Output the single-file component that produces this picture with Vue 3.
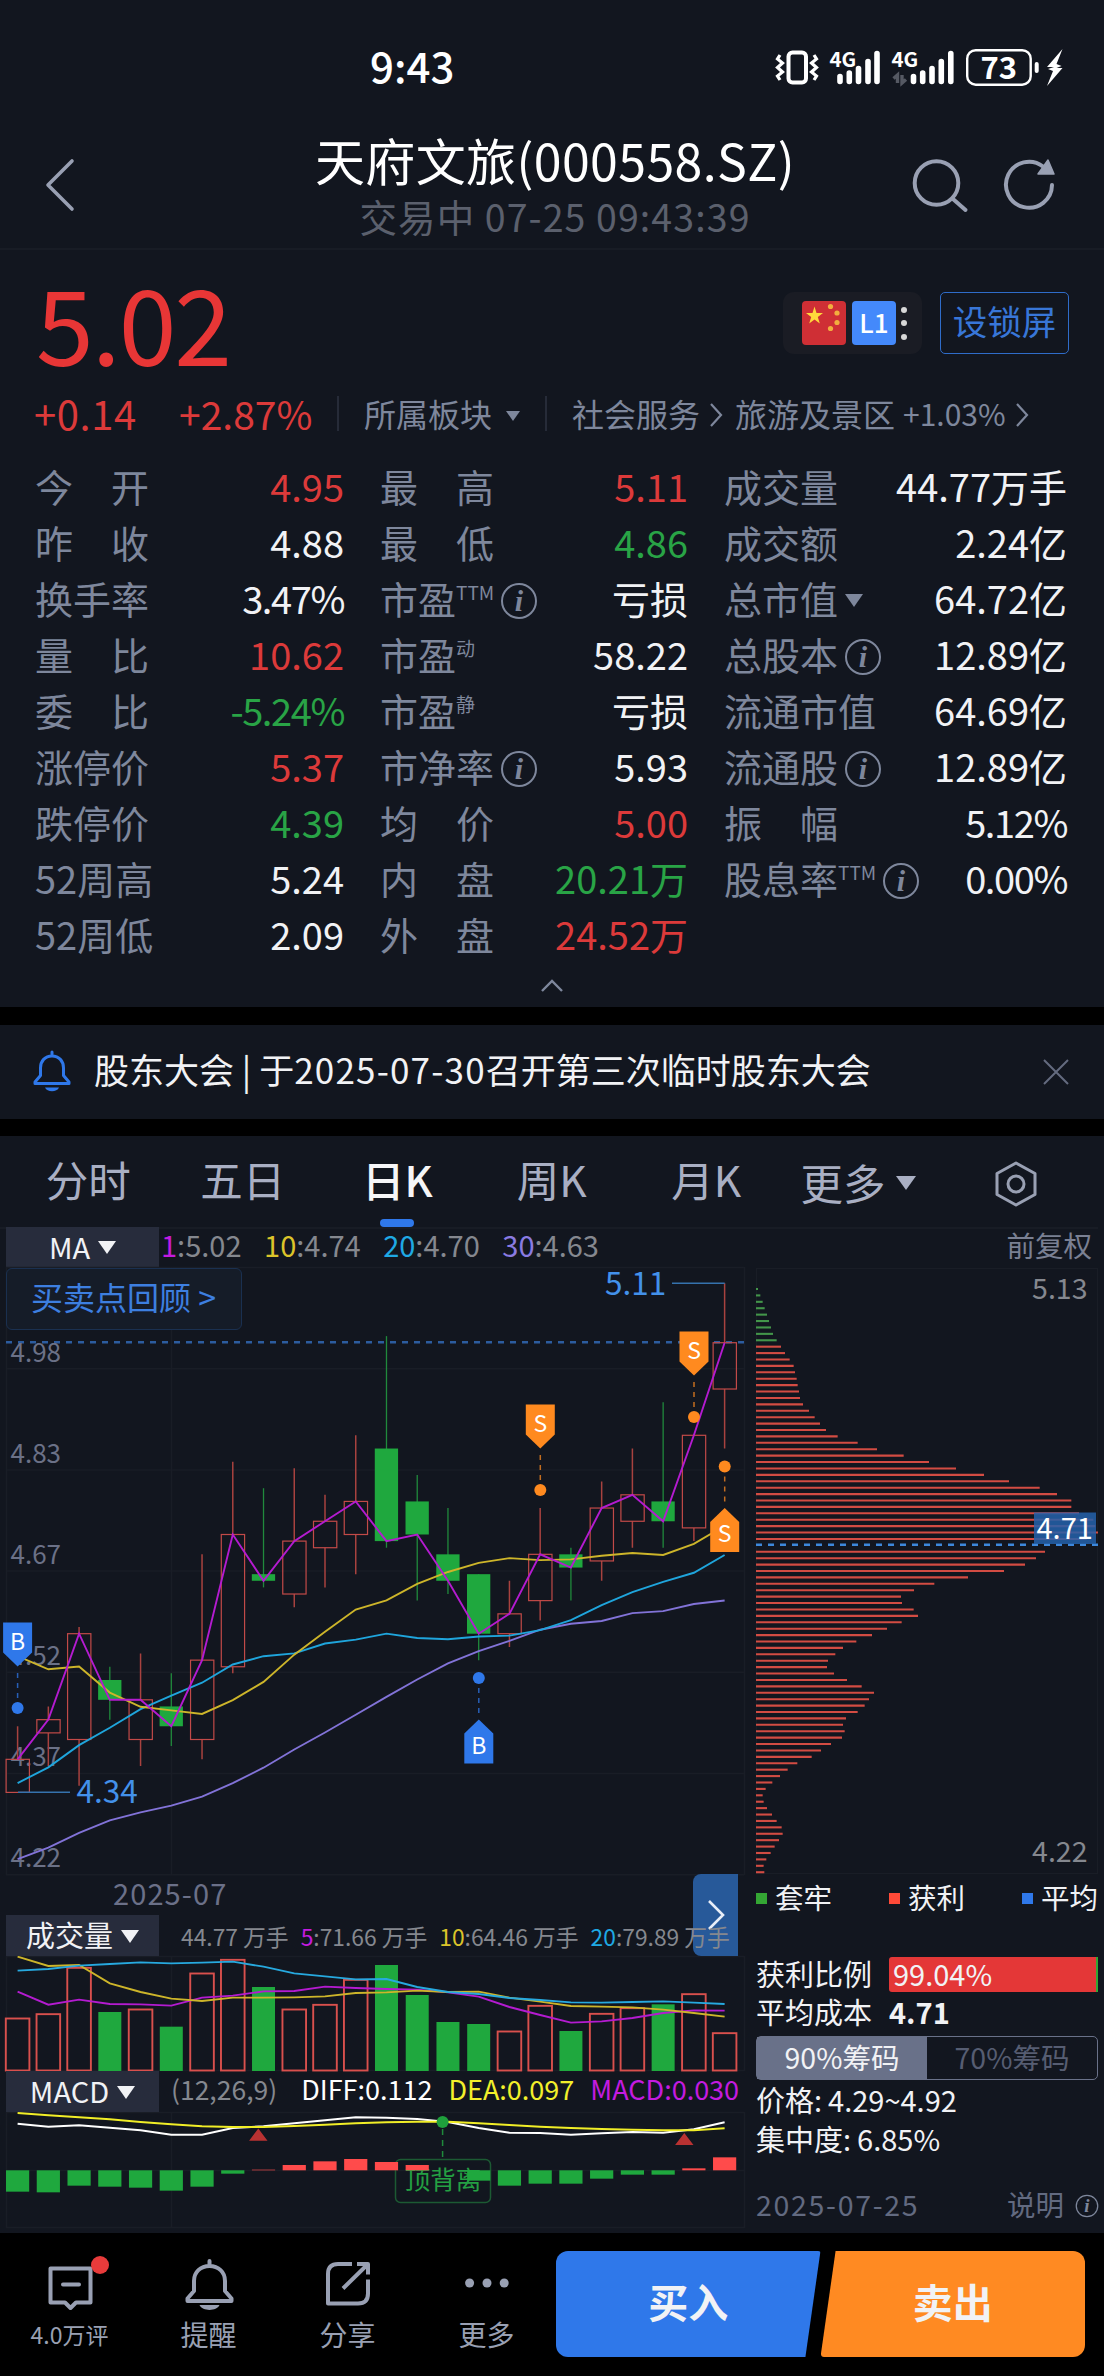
<template>
  <div class="screen">
    <div class="status-bar">
      <span class="clock">9:43</span>
      <svg class="status-icons" width="292" height="44" viewBox="774 46 292 44">
        <g fill="none" stroke="#fff">
          <rect x="788.5" y="52.5" width="17.5" height="30" rx="4" stroke-width="4" />
          <path d="M780 55l-2.5 4 5 4-5 4.500 5 4.500-5 4 2.500 4" stroke-width="3.200" />
          <path d="M814 55l2.500 4-5 4 5 4.500-5 4.500 5 4-2.500 4" stroke-width="3.200" />
          <rect x="967.200" y="50.200" width="63.500" height="34.500" rx="8.500" stroke-width="2.400" />
          <g stroke-width="5.600" stroke-linecap="round">
            <path d="M840 76.500v5M849.300 73v8.500M858.500 68.500v13M868 61.500v20M877 53.500v28" />
            <path d="M913.500 76.500v5M922.700 73v8.500M932 68.500v13M941.300 61.500v20M950.800 53.500v28" />
          </g>
          <path d="M1036.700 64v7" stroke-width="4" stroke-linecap="round" />
        </g>
        <path d="M897.500 83V75l-4 3.500M902 75v8l4-3.500" stroke="#555963" stroke-width="3.400" fill="none" />
        <path d="M1062.500 49l-15.500 18h7l-6 2 5 2-6 15 15.500-18h-6l5-2-5-2z" fill="#fff" />
        <text class="net" x="829.500" y="67">4G</text>
        <text class="net" x="891.500" y="67">4G</text>
        <text class="battery" x="980.500" y="79">73</text>
      </svg>
    </div>

    <header class="header">
      <svg class="back" width="34" height="56" viewBox="0 0 34 56">
        <path d="M30 4L6 28l24 24" fill="none" stroke="#99a0b3" stroke-width="3.600" stroke-linecap="round" stroke-linejoin="round" />
      </svg>
      <div class="title-box">
        <div class="title">天府文旅(000558.SZ)</div>
        <div class="subtitle">交易中 07-25 09:43:39</div>
      </div>
      <div class="header-actions">
        <svg width="58" height="56" viewBox="0 0 58 56">
          <g fill="none" stroke="#99a0b3" stroke-width="4" stroke-linecap="round">
            <circle cx="25.500" cy="26" r="21.800" />
            <path d="M42 42l12.500 11" />
          </g>
        </svg>
        <svg width="56" height="56" viewBox="0 0 56 56">
          <path d="M50 28A23 23 0 1 1 41 9.500" fill="none" stroke="#99a0b3" stroke-width="4" stroke-linecap="round" />
          <path d="M36 17L46 3l6 14z" fill="#99a0b3" stroke="#99a0b3" stroke-width="1.500" stroke-linejoin="round" />
        </svg>
      </div>
    </header>

    <section class="quote">
      <div class="price-row">
        <span class="price">5.02</span>
        <div class="level-pill">
          <svg width="44" height="44" viewBox="0 0 44 44">
            <rect width="44" height="44" rx="4" fill="#cf2f35" />
            <polygon points="12.500,5.500 14.500,12 21,12 15.800,16 17.800,22.500 12.500,18.500 7.200,22.500 9.200,16 4,12 10.500,12" fill="#ffd93b" />
            <g fill="#f2ae3e">
              <circle cx="28.500" cy="5.500" r="2.600" />
              <circle cx="35" cy="12" r="2.600" />
              <circle cx="35" cy="21.500" r="2.600" />
              <circle cx="28.500" cy="27.500" r="2.600" />
            </g>
          </svg>
          <span class="l1">L1</span>
          <span class="dots"><i></i><i></i><i></i></span>
        </div>
        <span class="lock-btn">设锁屏</span>
      </div>

      <div class="board-row">
        <span class="change first">+0.14</span>
        <span class="change">+2.87%</span>
        <span class="divider"></span>
        <span class="board">所属板块</span>
        <span class="tri small"></span>
        <span class="divider second"></span>
        <span class="board">社会服务</span>
        <svg class="chevron" width="14" height="26" viewBox="0 0 14 26"><path d="M2 2l10 11L2 24" /></svg>
        <span class="board">旅游及景区</span>
        <span class="board-change">+1.03%</span>
        <svg class="chevron last" width="14" height="26" viewBox="0 0 14 26"><path d="M2 2l10 11L2 24" /></svg>
      </div>

      <div class="stats">
        <div v-for="(col, c) in stats" :key="c" class="stats-col">
          <div v-for="item in col" :key="item.label + (item.sup || '')" class="stat">
            <span class="stat-label">{{ item.label }}</span>
            <span v-if="item.sup" class="stat-sup">{{ item.sup }}</span>
            <svg v-if="item.info" class="info" width="38" height="38" viewBox="0 0 38 38">
              <circle cx="19" cy="19" r="17" />
              <text x="19" y="29">i</text>
            </svg>
            <span v-if="item.drop" class="tri stat-drop"></span>
            <span class="stat-value" :class="[item.color, { percent: item.value.endsWith('%') }]">{{ item.value }}</span>
          </div>
        </div>
      </div>

      <div class="collapse">
        <svg width="26" height="16" viewBox="0 0 26 16"><path d="M3 13L13 3l10 10" /></svg>
      </div>
    </section>

    <section class="notice">
      <svg width="42" height="44" viewBox="0 0 42 44">
        <path d="M21 2v4M21 6c-7 0-11.500 5-11.500 12v7.500L4 32v1.500h34V32l-5.500-6.500V18c0-7-4.500-12-11.500-12z" fill="none" stroke="#2f78ea" stroke-width="3" stroke-linejoin="round" stroke-linecap="round" />
        <path d="M14 37.500h14c-2 5-12 5-14 0z" fill="#2f78ea" />
      </svg>
      <span class="notice-text">股东大会 | 于<span class="date">2025-07-30</span>召开第三次临时股东大会</span>
      <svg class="close" width="28" height="28" viewBox="0 0 28 28"><path d="M2 2l24 24M26 2L2 26" /></svg>
    </section>

    <nav class="tabs">
      <span v-for="tab in tabs" :key="tab" class="tab" :class="{ active: tab === '日K' }">{{ tab }}</span>
      <span class="tab more">更多<i class="tri"></i></span>
      <svg class="setting" width="46" height="48" viewBox="0 0 46 48">
        <path d="M23 3l19 10.500v21L23 45 4 34.500v-21z" fill="none" stroke="#99a0b3" stroke-width="3" stroke-linejoin="round" />
        <circle cx="23" cy="24" r="8" fill="none" stroke="#99a0b3" stroke-width="3" />
      </svg>
    </nav>

    <section class="charts">
      <div class="left">
        <div class="legend ma-row">
          <span class="chip">MA<i class="tri"></i></span>
          <span v-for="ma in maLegend" :key="ma.n" class="ma"><b :style="{ color: ma.color }">{{ ma.n }}</b>:{{ ma.v }}</span>
        </div>

        <div class="kline">
          <svg width="745" height="608" viewBox="0 0 745 608">
            <g class="grid">
              <path v-for="n in 7" :key="n" :d="`M6 ${(n - 1) * 101.200 + 0.5}H744`" />
              <path d="M6.500 0V608M171.500 0V608M744.500 0V608" />
            </g>
            <path d="M6 75.300H744" stroke="#2c5c9f" stroke-width="2.600" stroke-dasharray="6 6" />
            <text v-for="(p, i) in priceLabels" :key="p" class="axis" x="10.500" :y="i * 101 + 95">{{ p }}</text>

            <g v-for="(k, i) in candles" :key="i">
              <template v-if="isUp(i)">
                <path :d="`M${cx(i)} ${py(k[0])}V${py(k[2])}M${cx(i)} ${py(k[1])}V${py(k[3])}`" stroke="#a8423f" stroke-width="1.500" />
                <rect :x="cx(i) - 11.500" :y="py(k[2])" width="23.300" :height="py(k[1]) - py(k[2])" fill="none" stroke="#c24a48" stroke-width="1.200" />
              </template>
              <template v-else>
                <path :d="`M${cx(i)} ${py(k[0])}V${py(k[3])}`" stroke="#208a3c" stroke-width="1.300" />
                <rect :x="cx(i) - 11.700" :y="py(k[1])" width="23.300" :height="py(k[2]) - py(k[1])" fill="#1fa83e" />
              </template>
            </g>

            <g fill="none" stroke-width="1.900">
              <polyline :points="points(ma30, ky)" stroke="#8273d8" />
              <polyline :points="points(ma20, ky)" stroke="#1fa5dc" />
              <polyline :points="points(ma10, ky)" stroke="#cdb52a" />
              <polyline :points="closePoints" stroke="#b41bd0" />
            </g>

            <path d="M18 525.200H70M672 16.200H724.700" stroke="#3572ad" stroke-width="1.400" />
            <text class="extreme" x="76.500" y="535.500">4.34</text>
            <text class="extreme" x="605" y="27.500">5.11</text>

            <g v-for="m in markers" :key="m.x" :transform="`translate(${m.x} ${m.y})`" :fill="m.color">
              <circle r="6" />
              <path :d="m.up ? 'M0 10V38' : 'M0 -10V-36'" :stroke="m.color" stroke-width="1.500" stroke-dasharray="5 5" opacity="0.750" />
              <path :d="m.up ? 'M-14.500 85.500V55.500L0 41.500L14.500 55.500V85.500z' : 'M-14.500 -85.500V-55.500L0 -41.500L14.500 -55.500V-85.500z'" />
              <text class="mark" x="0" :y="m.up ? 76 : -58">{{ m.t }}</text>
            </g>
          </svg>
          <span class="review">买卖点回顾 &gt;</span>
        </div>

        <div class="month"><span>2025-07</span></div>

        <div class="legend vol-row">
          <span class="chip">成交量<i class="tri"></i></span>
          <span class="vol">44.77 万手</span>
          <span v-for="v in volLegend" :key="v.n" class="vol"><b :style="{ color: v.color }">{{ v.n }}</b>:{{ v.v }} 万手</span>
          <span class="next">
            <svg width="20" height="32" viewBox="0 0 20 32"><path d="M3 2l14 14L3 30" /></svg>
          </span>
        </div>

        <svg width="745" height="115" viewBox="0 0 745 115">
          <g class="grid">
            <path d="M6 0.500H744M6 114.500H744M6.500 0V115M171.500 0V115M744.500 0V115" />
          </g>
          <template v-for="(v, i) in volumes" :key="i">
            <rect v-if="isUp(i)" :x="cx(i) - 11.800" :y="vy(v) + 0.5" width="23.600" :height="114 - vy(v)" fill="none" stroke="#d9504d" stroke-width="1.900" />
            <rect v-else :x="cx(i) - 11.500" :y="vy(v)" width="23" :height="115 - vy(v)" fill="#1fa83e" />
          </template>
          <g fill="none" stroke-width="1.900">
            <polyline :points="points(vol5, vy)" stroke="#b41bd0" />
            <polyline :points="points(vol10, vy)" stroke="#cdb52a" />
            <polyline :points="points(vol20, vy)" stroke="#27a9df" />
          </g>
        </svg>

        <div class="legend macd-row">
          <span class="chip">MACD<i class="tri"></i></span>
          <span class="macd params">(12,26,9)</span>
          <span class="macd diff">DIFF:0.112</span>
          <span class="macd dea">DEA:0.097</span>
          <span class="macd bar">MACD:0.030</span>
        </div>

        <svg width="745" height="116" viewBox="0 0 745 116">
          <g class="grid">
            <path d="M6 0.500H744M6 58.500H744M6 115.500H744M6.500 0V116M171.500 0V116M744.500 0V116" />
          </g>
          <rect x="395.500" y="47.500" width="95" height="43" rx="5" fill="none" stroke="#1c5a33" stroke-width="1.500" />
          <text class="diverge" x="443" y="77">顶背离</text>
          <template v-for="(v, i) in macdBars" :key="i">
            <rect :x="cx(i) - 11.600" :y="Math.min(58.300, my(v))" width="23.200" :height="Math.abs(my(v) - 58.300)" :fill="v < 931 ? '#ff4b4b' : '#1fa83e'" />
          </template>
          <g fill="none" stroke-width="2">
            <polyline :points="points(diff, my)" stroke="#fff" />
            <polyline :points="points(dea, my)" stroke="#f1ee27" />
          </g>
          <path d="M258.300 16.500l9.200 12.300h-18.400zM684.300 21l9.200 12h-18.400z" fill="#b93232" />
          <path d="M442.600 17V47" stroke="#1f8a3b" stroke-width="1.500" stroke-dasharray="6 5" />
          <circle cx="442.600" cy="10" r="6" fill="#1fa03c" />
        </svg>
      </div>

      <div class="right">
        <div class="adjust">前复权</div>
        <svg width="344" height="606" viewBox="0 0 344 606">
          <rect class="frame" x="1.500" y="0.500" width="341" height="605" />
          <path v-for="(w, i) in chips" :key="i" :d="`M1 ${i * 6.409 + 21}h${(w - 48) / 3}`" :stroke="i < 9 ? '#43954a' : '#d34c43'" stroke-width="2.100" />
          <path d="M1 276.800H343" stroke="#3d88dc" stroke-width="2.400" stroke-dasharray="6 6" />
          <rect x="279" y="244.500" width="62" height="31.500" fill="#2462ab" opacity="0.850" />
          <text class="cost" x="281.500" y="271">4.71</text>
          <text class="range" x="332.500" y="30.500">5.13</text>
          <text class="range" x="332.500" y="594">4.22</text>
        </svg>
        <div class="chip-legend">
          <span><i class="trapped"></i>套牢</span>
          <span><i class="profit"></i>获利</span>
          <span><i class="average"></i>平均</span>
        </div>
        <div class="ratio"><span>获利比例</span><span class="ratio-bar">99.04%</span></div>
        <div class="cost-row"><span>平均成本</span><b>4.71</b></div>
        <div class="segment"><span class="on">90%筹码</span><span>70%筹码</span></div>
        <div class="detail"><span>价格:</span>4.29~4.92</div>
        <div class="detail"><span>集中度:</span>6.85%</div>
        <div class="chip-foot">
          <span class="chip-date">2025-07-25</span>
          <span class="explain">说明</span>
          <svg class="info" width="24" height="24" viewBox="0 0 38 38">
            <circle cx="19" cy="19" r="17" />
            <text x="19" y="29">i</text>
          </svg>
        </div>
      </div>
    </section>

    <footer class="bottom">
      <div class="action">
        <svg width="64" height="60" viewBox="37 2250 64 60" overflow="visible">
          <path d="M49.500 2266.500h40v34H75l-5.500 5.500-5.500-5.500H49.500zM62 2282.500h16" />
          <circle cx="99" cy="2263" r="9" fill="#e83b3b" stroke="none" />
        </svg>
        <span class="small-label">4.0万评</span>
      </div>
      <div class="action">
        <svg width="60" height="60" viewBox="178 2252 60 60">
          <path d="M208.500 2261v4M208.500 2266c-9 0-15.500 6-15.500 15v10l-6.500 7.500v2.500h44v-2.500l-6.500-7.500v-10c0-9-6.500-15-15.500-15z" />
          <path d="M198.500 2305h20c-3 6.500-17 6.500-20 0z" fill="#99a0b3" stroke="none" />
        </svg>
        <span>提醒</span>
      </div>
      <div class="action">
        <svg width="60" height="60" viewBox="317 2252 60 60">
          <path d="M351 2264h-14q-10 0-10 10v29.500h30q10 0 10-10V2279.500M356 2264h11v10.500M366 2265l-24 23.500" stroke-linecap="butt" />
        </svg>
        <span>分享</span>
      </div>
      <div class="action">
        <svg width="60" height="60" viewBox="456 2253 60 60">
          <g fill="#99a0b3" stroke="none">
            <circle cx="468.600" cy="2284" r="4.500" />
            <circle cx="486" cy="2284" r="4.500" />
            <circle cx="503.200" cy="2284" r="4.500" />
          </g>
        </svg>
        <span>更多</span>
      </div>
      <div class="trade">
        <div class="buy">买入</div>
        <div class="sell">卖出</div>
      </div>
    </footer>
  </div>
</template>

<script setup>
const stats = [
  [
    { label: '今　开', value: '4.95', color: 'red' },
    { label: '昨　收', value: '4.88' },
    { label: '换手率', value: '3.47%' },
    { label: '量　比', value: '10.62', color: 'red' },
    { label: '委　比', value: '-5.24%', color: 'green' },
    { label: '涨停价', value: '5.37', color: 'red' },
    { label: '跌停价', value: '4.39', color: 'green' },
    { label: '52周高', value: '5.24' },
    { label: '52周低', value: '2.09' }
  ],
  [
    { label: '最　高', value: '5.11', color: 'red' },
    { label: '最　低', value: '4.86', color: 'green' },
    { label: '市盈', sup: 'TTM', info: true, value: '亏损' },
    { label: '市盈', sup: '动', value: '58.22' },
    { label: '市盈', sup: '静', value: '亏损' },
    { label: '市净率', info: true, value: '5.93' },
    { label: '均　价', value: '5.00', color: 'red' },
    { label: '内　盘', value: '20.21万', color: 'green' },
    { label: '外　盘', value: '24.52万', color: 'red' }
  ],
  [
    { label: '成交量', value: '44.77万手' },
    { label: '成交额', value: '2.24亿' },
    { label: '总市值', drop: true, value: '64.72亿' },
    { label: '总股本', info: true, value: '12.89亿' },
    { label: '流通市值', value: '64.69亿' },
    { label: '流通股', info: true, value: '12.89亿' },
    { label: '振　幅', value: '5.12%' },
    { label: '股息率', sup: 'TTM', info: true, value: '0.00%' }
  ]
]

const tabs = ['分时', '五日', '日K', '周K', '月K']

const maLegend = [
  { n: '1', v: '5.02', color: '#c41be0' },
  { n: '10', v: '4.74', color: '#dcc42a' },
  { n: '20', v: '4.70', color: '#1fa9e4' },
  { n: '30', v: '4.63', color: '#8a7be2' }
]

const volLegend = [
  { n: '5', v: '71.66', color: '#c41be0' },
  { n: '10', v: '64.46', color: '#dcc42a' },
  { n: '20', v: '79.89', color: '#1fa9e4' }
]

const priceLabels = ['4.98', '4.83', '4.67', '4.52', '4.37', '4.22']

// [high, body bottom, body top, low] for up days, [high, body top, body bottom, low] for down days
const candles = [
  [4.44, 4.34, 4.39, 4.34],
  [4.47, 4.43, 4.45, 4.38],
  [4.59, 4.42, 4.58, 4.35],
  [4.53, 4.51, 4.48, 4.45],
  [4.55, 4.42, 4.48, 4.38],
  [4.52, 4.47, 4.44, 4.41],
  [4.7, 4.42, 4.54, 4.39],
  [4.84, 4.53, 4.73, 4.52],
  [4.8, 4.67, 4.66, 4.65],
  [4.83, 4.64, 4.72, 4.62],
  [4.79, 4.71, 4.75, 4.65],
  [4.88, 4.73, 4.78, 4.67],
  [5.03, 4.86, 4.72, 4.71],
  [4.82, 4.78, 4.73, 4.63],
  [4.77, 4.7, 4.66, 4.64],
  [4.67, 4.67, 4.58, 4.54],
  [4.66, 4.58, 4.61, 4.56],
  [4.77, 4.63, 4.7, 4.6],
  [4.71, 4.7, 4.68, 4.63],
  [4.81, 4.69, 4.77, 4.66],
  [4.86, 4.75, 4.79, 4.71],
  [4.93, 4.78, 4.75, 4.71],
  [4.88, 4.74, 4.88, 4.72],
  [5.11, 4.95, 5.02, 4.86]
]

const ma10 = [1002, 1035, 1028, 1094, 1130, 1139, 1148, 1113, 1067, 998, 940, 884, 861, 819, 789, 766, 754, 759, 757, 748, 741, 746, 718, 672]
const ma20 = [1323, 1283, 1227, 1183, 1136, 1102, 1069, 1023, 1002, 995, 970, 960, 945, 956, 959, 952, 950, 936, 911, 873, 840, 814, 791, 746]
const ma30 = [1515, 1486, 1449, 1417, 1397, 1380, 1357, 1323, 1284, 1238, 1195, 1150, 1105, 1061, 1020, 989, 963, 935, 920, 913, 893, 888, 870, 861]

const volumes = [474, 461, 322, 456, 447, 500, 339, 298, 381, 447, 433, 358, 315, 405, 486, 492, 513, 436, 513, 460, 443, 433, 401, 518]
const vol5 = [395, 434, 419, 432, 433, 437, 413, 407, 394, 393, 380, 384, 387, 389, 397, 410, 441, 465, 488, 484, 474, 459, 451, 452]
const vol10 = [290, 318, 315, 370, 396, 416, 423, 413, 413, 412, 409, 399, 397, 392, 396, 395, 413, 425, 438, 440, 442, 449, 459, 470]
const vol20 = [332, 327, 317, 312, 307, 310, 308, 305, 320, 340, 349, 358, 357, 381, 396, 402, 414, 420, 427, 428, 426, 424, 428, 432]

const macdBars = [995, 997, 977, 980, 983, 992, 980, 941, 929, 915, 904, 897, 906, 915, 931, 962, 977, 971, 971, 956, 944, 944, 925, 892]
const diff = [791, 800, 796, 803, 811, 824, 824, 804, 799, 790, 781, 772, 773, 777, 786, 804, 818, 819, 824, 820, 816, 818, 808, 787]
const dea = [759, 766, 772, 778, 786, 793, 799, 801, 801, 798, 794, 790, 787, 785, 785, 790, 795, 800, 804, 807, 809, 811, 811, 805]

const chips = [
  54, 61, 68, 74, 81, 87, 93, 99, 110, 123, 135, 149, 161, 165, 170, 173, 177, 180, 189, 207, 224, 240, 258,
  293, 353, 411, 491, 567, 648, 732, 807, 899, 951, 994, 994, 1017, 1060, 1066, 1074, 1040, 48, 915, 888, 855,
  792, 684, 583, 522, 483, 486, 521, 534, 485, 441, 396, 349, 309, 286, 264, 261, 282, 321, 365, 402, 387, 374,
  353, 318, 309, 314, 306, 273, 243, 215, 172, 143, 120, 97, 77, 68, 71, 81, 96, 110, 125, 128, 117, 104, 92,
  79, 71, 73
]

const markers = [
  { x: 17.6, y: 441, t: 'B', color: '#2f78ea' },
  { x: 540.3, y: 223, t: 'S', color: '#ff8a1f' },
  { x: 694, y: 150, t: 'S', color: '#ff8a1f' },
  { x: 724.7, y: 199.4, t: 'S', color: '#ff8a1f', up: true },
  { x: 478.8, y: 411, t: 'B', color: '#2f78ea', up: true }
]

const cx = (i) => 17.6 + i * 30.74
const py = (price) => 16.2 + (5.11 - price) * 661.3
const ky = (v) => v / 2.529 - 7
const vy = (v) => v / 3 - 96
const my = (v) => v / 3 - 252

const isUp = (i) => candles[i][2] > candles[i][1]
const points = (list, y) => list.map((v, i) => `${cx(i)},${y(v)}`).join(' ')
const closePoints = candles.map((k, i) => `${cx(i)},${py(k[2])}`).join(' ')
</script>

<style>
body {
  margin: 0;
  background: #000;
}
</style>

<style scoped>
.screen {
  width: 1104px;
  height: 2376px;
  overflow: hidden;
  background: #12161f;
  color: #f1f2f5;
  font-family: "Noto Sans CJK SC", "Noto Sans", sans-serif;
  white-space: nowrap;
}

.screen * {
  box-sizing: border-box;
}

svg {
  display: block;
  flex: none;
  overflow: visible;
}

.red {
  color: #dc3a3a;
}

.green {
  color: #29a446;
}

.tri {
  display: inline-block;
  width: 0;
  height: 0;
  border: 9px solid transparent;
  border-top: 13px solid currentColor;
  border-bottom: 0;
}

/* status bar */
.status-bar {
  display: flex;
  justify-content: space-between;
  height: 118px;
  padding: 46px 38px 0 370px;
}

.clock {
  font-size: 42px;
  font-weight: 500;
  line-height: 38px;
  color: #fff;
}

.net {
  font-size: 20.500px;
  font-weight: 700;
  fill: #fff;
}

.battery {
  font-size: 31px;
  font-weight: 700;
  fill: #fff;
}

/* header */
.header {
  display: grid;
  grid-template-columns: 203px 1fr 197px;
  height: 132px;
  border-bottom: 2px solid #181c25;
}

.back {
  margin: 39px 0 0 42px;
}

.title-box {
  padding-top: 10px;
  text-align: center;
}

.title {
  font-size: 50px;
  line-height: 62px;
  letter-spacing: 0.4px;
  color: #fff;
}

.subtitle {
  font-size: 37.500px;
  line-height: 52px;
  letter-spacing: 1.1px;
  color: #5b606d;
}

.header-actions {
  display: flex;
  gap: 33px;
  padding-top: 39px;
  margin-left: 4px;
}

/* quote */
.quote {
  height: 757px;
}

.price-row {
  display: flex;
  align-items: center;
  height: 142px;
  padding: 0 35px 0 36px;
}

.price {
  flex: 1;
  font-size: 104px;
  line-height: 142px;
  letter-spacing: -2px;
  color: #e83636;
}

.level-pill {
  display: flex;
  align-items: center;
  gap: 6px;
  width: 139px;
  height: 62px;
  padding-left: 19px;
  margin: 4px 18px 0 0;
  border-radius: 11px;
  background: #1a1c24;
}

.l1 {
  width: 44px;
  height: 44px;
  border-radius: 4px;
  background: #4489fb;
  color: #fff;
  font-size: 26px;
  font-weight: 500;
  line-height: 41px;
  text-align: center;
}

.dots {
  display: flex;
  flex-direction: column;
  gap: 7.500px;
  margin-left: -1px;
}

.dots i {
  width: 6px;
  height: 6px;
  border-radius: 50%;
  background: #d8d8d8;
}

.lock-btn {
  width: 129px;
  height: 62px;
  margin-top: 4px;
  border: 1.5px solid #2f6cc9;
  border-radius: 5px;
  color: #3876d8;
  font-size: 34.500px;
  line-height: 54px;
  text-align: center;
}

.board-row {
  display: flex;
  align-items: center;
  height: 42px;
  padding-left: 34px;
  line-height: 42px;
  color: #7e879c;
}

.change {
  width: 158px;
  font-size: 39px;
  color: #dc3a3a;
}

.change.first {
  width: 145px;
  font-size: 40px;
  letter-spacing: 0.6px;
}

.divider {
  width: 2px;
  height: 35px;
  margin-right: 25px;
  background: #262b38;
}

.board {
  font-size: 32px;
}

.tri.small {
  margin: 5px 25px 0 14px;
  border-width: 10px 7.500px 0;
}

.chevron {
  margin: 4px 12px 0 9px;
  fill: none;
  stroke: #7e879c;
  stroke-width: 2.2;
}

.board-change {
  margin-left: 8px;
  font-size: 30px;
}

.stats {
  display: grid;
  grid-template-columns: 309px 308px 343px;
  column-gap: 36px;
  padding: 24px 0 0 35px;
}

.stat {
  display: flex;
  align-items: center;
  height: 56px;
  font-size: 38px;
  line-height: 56px;
}

.stat-label,
.stat-sup {
  color: #7e879c;
}

.stat-sup {
  align-self: flex-start;
  margin-top: 12px;
  font-size: 19px;
  line-height: 20px;
}

.stat-value {
  margin-left: auto;
}

.stat-value.percent {
  letter-spacing: -1.4px;
}

.stat-drop {
  margin: 4px 0 0 7px;
  color: #7e879c;
}

.info {
  margin: 5px 0 0 6px;
}

.info circle {
  fill: none;
  stroke: #7e879c;
  stroke-width: 2;
}

.info text {
  fill: #7e879c;
  font: italic bold 30px "Liberation Serif", serif;
  text-anchor: middle;
}

.collapse {
  display: flex;
  justify-content: center;
  padding-top: 16px;
}

.collapse path {
  fill: none;
  stroke: #7e879c;
  stroke-width: 2.4;
}

/* notice */
.notice {
  display: flex;
  align-items: center;
  height: 129px;
  padding: 0 34px 0 31px;
  border: solid #000;
  border-width: 18px 0 17px;
}

.notice-text {
  flex: 1;
  margin: -8px 0 0 21px;
  font-size: 35px;
}

.date {
  letter-spacing: 1.2px;
}

.close path {
  fill: none;
  stroke: #646b7f;
  stroke-width: 2;
}

/* tabs */
.tabs {
  display: flex;
  height: 91px;
  padding-left: 11px;
}

.tab {
  position: relative;
  width: 154.5px;
  color: #a9afc3;
  font-size: 42.500px;
  line-height: 86px;
  text-align: center;
}

.tab.active {
  color: #f6f6f8;
  font-weight: 500;
}

.tab.active::after {
  content: "";
  position: absolute;
  left: 60px;
  bottom: 0;
  width: 34px;
  height: 8px;
  border-radius: 4px;
  background: #2f78ea;
}

.tab.more {
  display: flex;
  align-items: center;
  gap: 10px;
  width: 182px;
  padding-left: 17px;
}

.tab.more .tri {
  margin-top: 2px;
  border-width: 14px 10.500px 0;
}

.setting {
  margin: 24px 0 0 27px;
}

/* charts */
.charts {
  display: grid;
  grid-template-columns: 745px 359px;
  height: 1006px;
  background: linear-gradient(#181c25, #181c25) 0 0 / 1098px 2px no-repeat;
}

.grid {
  fill: none;
  stroke: #191d26;
  stroke-width: 1.5;
}

.legend {
  display: flex;
  position: relative;
  height: 41px;
  padding-left: 6px;
  line-height: 35px;
  color: #85888f;
}

.ma-row {
  height: 40px;
}

.chip {
  display: flex;
  justify-content: center;
  align-items: center;
  gap: 8px;
  width: 153px;
  height: 100%;
  padding-bottom: 2px;
  background: #272c3c;
  color: #f1f2f5;
  font-size: 29px;
}

.chip .tri {
  margin-top: 3px;
}

.legend b {
  font-weight: 400;
}

.ma {
  margin: 0 20.500px 0 2px;
  font-size: 29px;
}

.kline {
  position: relative;
}

.review {
  position: absolute;
  left: 6px;
  top: 1px;
  width: 236px;
  height: 62px;
  padding-left: 24px;
  border: 1.5px solid #1a3050;
  border-radius: 6px;
  background: #151c28;
  color: #3d7fe0;
  font-size: 32px;
  line-height: 55px;
}

.axis {
  font-size: 26px;
  fill: #6b7187;
}

.extreme {
  font-size: 31.500px;
  fill: #4391ea;
}

.mark {
  font-size: 23px;
  fill: #fff;
  text-anchor: middle;
}

.month {
  height: 40px;
  padding-left: 113px;
  color: #6b7088;
  font-size: 29px;
  line-height: 34px;
  letter-spacing: 1.1px;
}

.vol-row {
  line-height: 43px;
}

.vol {
  position: relative;
  z-index: 1;
  margin-right: 12px;
  font-size: 22.800px;
}

.vol-row .chip {
  margin-right: 22px;
}

.next {
  position: absolute;
  right: 7px;
  bottom: 0;
  display: flex;
  justify-content: center;
  align-items: center;
  width: 45px;
  height: 82px;
  border-radius: 8px 0 0 8px;
  background: #275999;
}

.next path {
  fill: none;
  stroke: #e8eef8;
  stroke-width: 2.6;
}

.macd {
  font-size: 27px;
  line-height: 36px;
}

.params {
  margin: 0 24px 0 12px;
  font-size: 26.500px;
}

.diff {
  margin-right: 16px;
  color: #fff;
}

.dea {
  margin-right: 16px;
  color: #f3f02b;
}

.bar {
  color: #c41be0;
}

.diverge {
  font-size: 25.500px;
  fill: #24a043;
  text-anchor: middle;
}

.right {
  padding-left: 10px;
  font-size: 28.500px;
}

.adjust {
  height: 41px;
  padding-right: 12px;
  color: #7a8093;
  line-height: 36px;
  text-align: right;
}

.frame {
  fill: none;
  stroke: #191d26;
}

.cost {
  font-size: 29px;
  fill: #fff;
}

.range {
  font-size: 28.500px;
  fill: #85888f;
  text-anchor: end;
}

.chip-legend {
  display: flex;
  justify-content: space-between;
  width: 343px;
  padding-left: 1px;
  line-height: 46px;
}

.chip-legend span {
  display: flex;
  align-items: center;
}

.chip-legend i {
  width: 11px;
  height: 11px;
  margin: 3px 8px 0 0;
}

.trapped {
  background: #34a634;
}

.profit {
  background: #ff4a38;
}

.average {
  background: #2f78ea;
}

.ratio {
  display: flex;
  width: 343px;
  margin-top: 37px;
  padding-left: 1px;
  font-size: 29px;
  line-height: 32px;
}

.ratio span:first-child,
.cost-row span {
  width: 133px;
}

.ratio-bar {
  flex: 1;
  height: 35px;
  padding-left: 4px;
  border-right: 2px solid #34a634;
  border-radius: 3px 0 0 3px;
  background: #e43737;
}

.cost-row {
  display: flex;
  height: 44px;
  padding-left: 1px;
  font-size: 29px;
  line-height: 38px;
}

.segment {
  display: flex;
  width: 342px;
  height: 44px;
  margin-left: 1px;
  border: 1px solid #697189;
  border-radius: 5px;
  line-height: 39px;
  text-align: center;
  color: #565d72;
}

.segment span {
  flex: 1;
}

.segment .on {
  background: #697189;
  color: #f1f2f5;
}

.detail {
  padding-left: 1px;
  font-size: 29px;
  line-height: 39px;
}

.detail span {
  margin-right: 6px;
}

.chip-foot {
  display: flex;
  align-items: center;
  width: 344px;
  margin-top: 23px;
  padding-left: 1px;
  color: #626a80;
  line-height: 46px;
}

.chip-date {
  flex: 1;
  letter-spacing: 1.7px;
}

.chip-foot .info {
  margin: 4px 0 0 11px;
}

/* bottom bar */
.bottom {
  display: flex;
  height: 143px;
  background: #000;
}

.action {
  display: flex;
  flex-direction: column;
  align-items: center;
  width: 139px;
  padding-top: 19px;
  color: #99a0b3;
  font-size: 28px;
  line-height: 44px;
}

.action svg {
  fill: none;
  stroke: #99a0b3;
  stroke-width: 4;
  stroke-linecap: round;
  stroke-linejoin: round;
}

.small-label {
  font-size: 23px;
}

.trade {
  display: flex;
  width: 529px;
  margin-top: 18px;
}

.buy,
.sell {
  width: 264.5px;
  height: 106px;
  font-size: 40px;
  font-weight: 700;
  line-height: 100px;
  text-align: center;
}

.buy {
  border-radius: 12px 3px 3px 12px;
  background: #2f78ea;
  clip-path: polygon(0 0, 100% 0, 94.3% 100%, 0 100%);
}

.sell {
  border-radius: 3px 12px 12px 3px;
  background: #ff8a22;
  clip-path: polygon(5.7% 0, 100% 0, 100% 100%, 0 100%);
}
</style>
